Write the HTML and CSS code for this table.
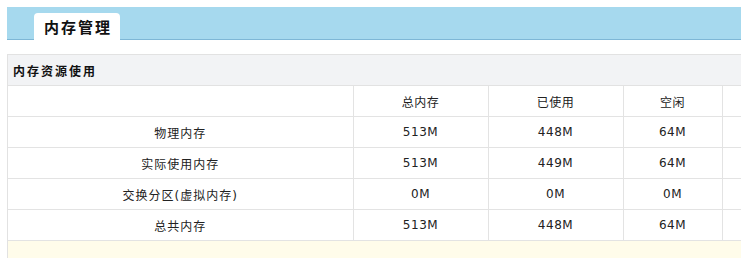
FILE: index.html
```html
<!DOCTYPE html>
<html lang="zh-CN">
<head>
<meta charset="utf-8">
<title>内存管理</title>
<link rel="stylesheet" href="styles.css">
</head>
<body>
<div class="page">
  <div class="tabbar">
    <div class="tab">内存管理</div>
  </div>
  <div class="section">
    <div class="section-title">内存资源使用</div>
    <table class="mem">
      <colgroup>
        <col class="c-name"><col class="c-num"><col class="c-num"><col class="c-free"><col class="c-rest">
      </colgroup>
      <tr><td></td><td>总内存</td><td>已使用</td><td>空闲</td><td></td></tr>
      <tr><td class="cn">物理内存</td><td>513M</td><td>448M</td><td>64M</td><td></td></tr>
      <tr><td class="cn">实际使用内存</td><td>513M</td><td>449M</td><td>64M</td><td></td></tr>
      <tr><td class="cn">交换分区(虚拟内存)</td><td>0M</td><td>0M</td><td>0M</td><td></td></tr>
      <tr><td class="cn">总共内存</td><td>513M</td><td>448M</td><td>64M</td><td></td></tr>
    </table>
    <div class="footer"></div>
  </div>
</div>
</body>
</html>
```
FILE: styles.css
```css
html, body {
  margin: 0;
  padding: 0;
  background: #ffffff;
  overflow: hidden;
}
.page {
  padding: 7px 0 0 7px;
  width: 741px;
  box-sizing: border-box;
  overflow: hidden;
  font-family: "DejaVu Sans", "Noto Sans CJK SC", sans-serif;
  color: #222;
}
.tabbar {
  height: 32px;
  background: #a6d9ee;
  border-bottom: 1px solid #7eb7d6;
  display: flex;
  align-items: flex-end;
  padding-left: 27px;
}
.tab {
  width: 86px;
  height: 27px;
  margin-bottom: -1px;
  background: #ffffff;
  border-radius: 4px 4px 0 0;
  font-family: "Noto Sans CJK SC", sans-serif;
  font-weight: 700;
  font-size: 15px;
  letter-spacing: 2px;
  color: #111;
  display: flex;
  align-items: center;
  justify-content: center;
  box-sizing: border-box;
  padding-left: 2px;
}
.section {
  margin-top: 14px;
  border-top: 1px solid #e2e2e2;
  border-left: 1px solid #e2e2e2;
  overflow: hidden;
}
.section-title {
  height: 30px;
  background: #f2f3f5;
  border-bottom: 1px solid #e2e2e2;
  font-family: "Noto Sans CJK SC", sans-serif;
  font-weight: 700;
  font-size: 12px;
  letter-spacing: 2px;
  color: #111;
  display: flex;
  align-items: center;
  padding-left: 5px;
}
.mem {
  border-collapse: collapse;
  table-layout: fixed;
  width: 792px;
}
.c-name { width: 345px; }
.c-num { width: 135px; }
.c-free { width: 99px; }
.c-rest { width: 78px; }
.mem td {
  height: 30px;
  padding: 0;
  border-bottom: 1px solid #e3e3e3;
  border-right: 1px solid #e3e3e3;
  text-align: center;
  font-size: 12px;
  letter-spacing: 0.5px;
  color: #222;
}
.mem td.cn {
  letter-spacing: 1px;
}
.footer {
  height: 17px;
  background: #fffcea;
}
```
